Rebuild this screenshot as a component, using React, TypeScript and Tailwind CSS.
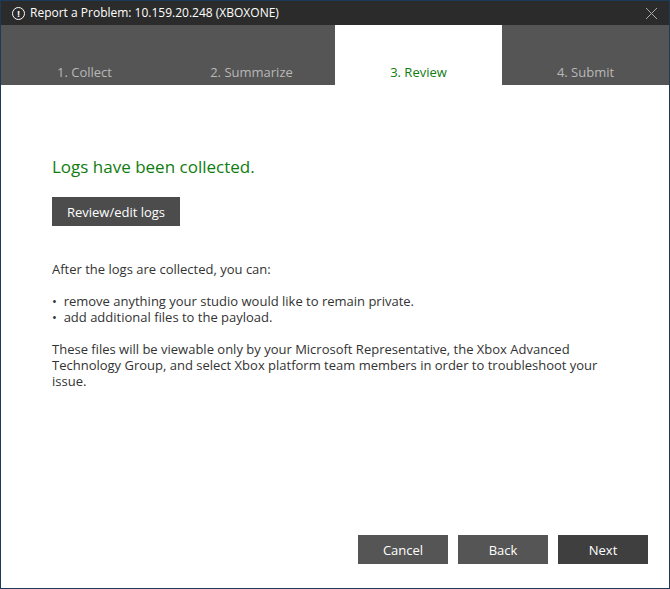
export default function App() {
  const tabs = ["1. Collect", "2. Summarize", "3. Review", "4. Submit"];
  return (
    <div className="w-[670px] h-[589px] border border-[#1c3a5a] bg-white flex flex-col" style={{ fontFamily: '"Open Sans", sans-serif' }}>
      <div className="h-[24px] bg-[#2b2b2b] flex items-center px-[11px] text-white text-[12px] shrink-0">
        <span className="w-[13px] h-[13px] rounded-full border border-white flex items-center justify-center text-[9px] font-bold mr-[5px] leading-none">!</span>
        <span>Report a Problem: 10.159.20.248 (XBOXONE)</span>
        <span className="ml-auto text-[#bbb]">
          <svg width="13" height="13" viewBox="0 0 13 13"><path d="M1 1L12 12M12 1L1 12" stroke="#aaa" strokeWidth="1" /></svg>
        </span>
      </div>
      <div className="h-[60px] bg-[#555555] grid grid-cols-4 shrink-0">
        {tabs.map((t, i) => (
          <div key={t} className={`flex items-end justify-center pb-[3px] text-[13px] ${i === 2 ? "bg-white text-[#107c10]" : "text-[#b8b8b8]"}`}>{t}</div>
        ))}
      </div>
      <div className="flex-1 flex flex-col px-[51px] pt-[70px] text-[#333] text-[13px] leading-[16px]">
        <div className="text-[#107c10] text-[17px] leading-[24px]">Logs have been collected.</div>
        <button className="mt-[18px] self-start w-[128px] h-[29px] bg-[#4c4c4c] text-white text-[13px]">Review/edit logs</button>
        <p className="mt-[35px]">After the logs are collected, you can:</p>
        <ul className="mt-[16px]">
          <li>•&nbsp; remove anything your studio would like to remain private.</li>
          <li>•&nbsp; add additional files to the payload.</li>
        </ul>
        <p className="mt-[16px] -mr-[10px]">These files will be viewable only by your Microsoft Representative, the Xbox Advanced Technology Group, and select Xbox platform team members in order to troubleshoot your issue.</p>
        <div className="mt-auto mb-[24px] -mr-[30px] flex justify-end gap-[10px]">
          <button className="w-[90px] h-[29px] bg-[#555555] text-white text-[13px]">Cancel</button>
          <button className="w-[90px] h-[29px] bg-[#555555] text-white text-[13px]">Back</button>
          <button className="w-[90px] h-[29px] bg-[#3f3f3f] text-white text-[13px]">Next</button>
        </div>
      </div>
    </div>
  );
}
